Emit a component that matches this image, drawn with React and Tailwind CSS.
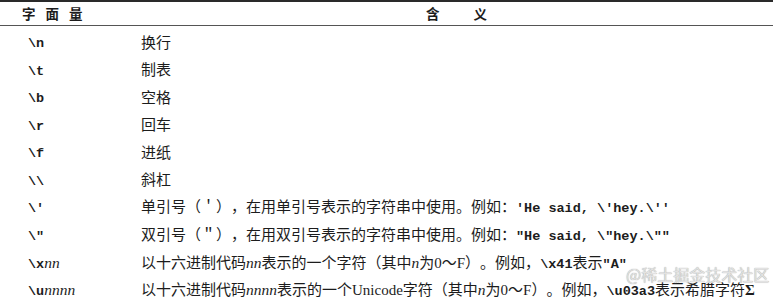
import React from 'react';

const cjk = { fontFamily: '"Liberation Serif", "Noto Sans CJK SC", serif' };

const Code = ({ children }) => (
  <span className="font-bold text-[13.5px]" style={{ fontFamily: '"Liberation Mono", monospace' }}>{children}</span>
);

const Var = ({ children }) => (
  <span className="italic text-[15.5px]" style={{ fontFamily: '"Liberation Serif", serif' }}>{children}</span>
);

const rows = [
  { code: <Code>\n</Code>, desc: '换行' },
  { code: <Code>\t</Code>, desc: '制表' },
  { code: <Code>\b</Code>, desc: '空格' },
  { code: <Code>\r</Code>, desc: '回车' },
  { code: <Code>\f</Code>, desc: '进纸' },
  { code: <Code>{'\\\\'}</Code>, desc: '斜杠' },
  {
    code: <Code>\'</Code>,
    desc: <>单引号（＇），在用单引号表示的字符串中使用。例如：<Code>'He said, \'hey.\''</Code></>,
  },
  {
    code: <Code>\"</Code>,
    desc: <>双引号（＂），在用双引号表示的字符串中使用。例如：<Code>"He said, \"hey.\""</Code></>,
  },
  {
    code: <><Code>\x</Code><Var>nn</Var></>,
    desc: <>以十六进制代码<Var>nn</Var>表示的一个字符（其中<Var>n</Var>为0～F）。例如，<Code>\x41</Code>表示<Code>"A"</Code></>,
  },
  {
    code: <><Code>\u</Code><Var>nnnn</Var></>,
    desc: <>以十六进制代码<Var>nnnn</Var>表示的一个Unicode字符（其中<Var>n</Var>为0～F）。例如，<Code>\u03a3</Code>表示希腊字符<span className="font-bold">Σ</span></>,
  },
];

export default function App() {
  return (
    <div className="relative w-[781px] h-[303px] bg-white overflow-hidden text-[#1c1c1c]">
      <div className="w-[773px]">
        {/* header */}
        <div className="flex items-center h-[26px] border-t-2 border-b border-t-[#2a2a2a] border-b-[#555]">
          <div
            className="w-[140px] pl-[22px] font-bold text-[13.5px] tracking-[10px]"
            style={{ fontFamily: '"Noto Sans CJK SC", sans-serif' }}
          >
            字面量
          </div>
          <div
            className="flex-1 text-center font-bold text-[13.5px] tracking-[34px] pl-[34px]"
            style={{ fontFamily: '"Noto Sans CJK SC", sans-serif' }}
          >
            含义
          </div>
        </div>

        {/* body */}
        <div className="pt-[3px]">
          {rows.map((row, i) => (
            <div
              key={i}
              className="flex items-center h-[27.5px] text-[15px] whitespace-nowrap [text-spacing-trim:space-all]"
              style={cjk}
            >
              <div className="w-[141px] pl-[28px]">{row.code}</div>
              <div className="flex-1">{row.desc}</div>
            </div>
          ))}
        </div>
      </div>

      {/* watermark */}
      <div
        className="absolute left-[626px] top-[262px] text-[16px] text-[#e2e2e2] [text-shadow:0_0_1px_#8a8a8a]"
        style={{ fontFamily: '"Noto Sans CJK SC", sans-serif' }}
      >
        @稀土掘金技术社区
      </div>
    </div>
  );
}
